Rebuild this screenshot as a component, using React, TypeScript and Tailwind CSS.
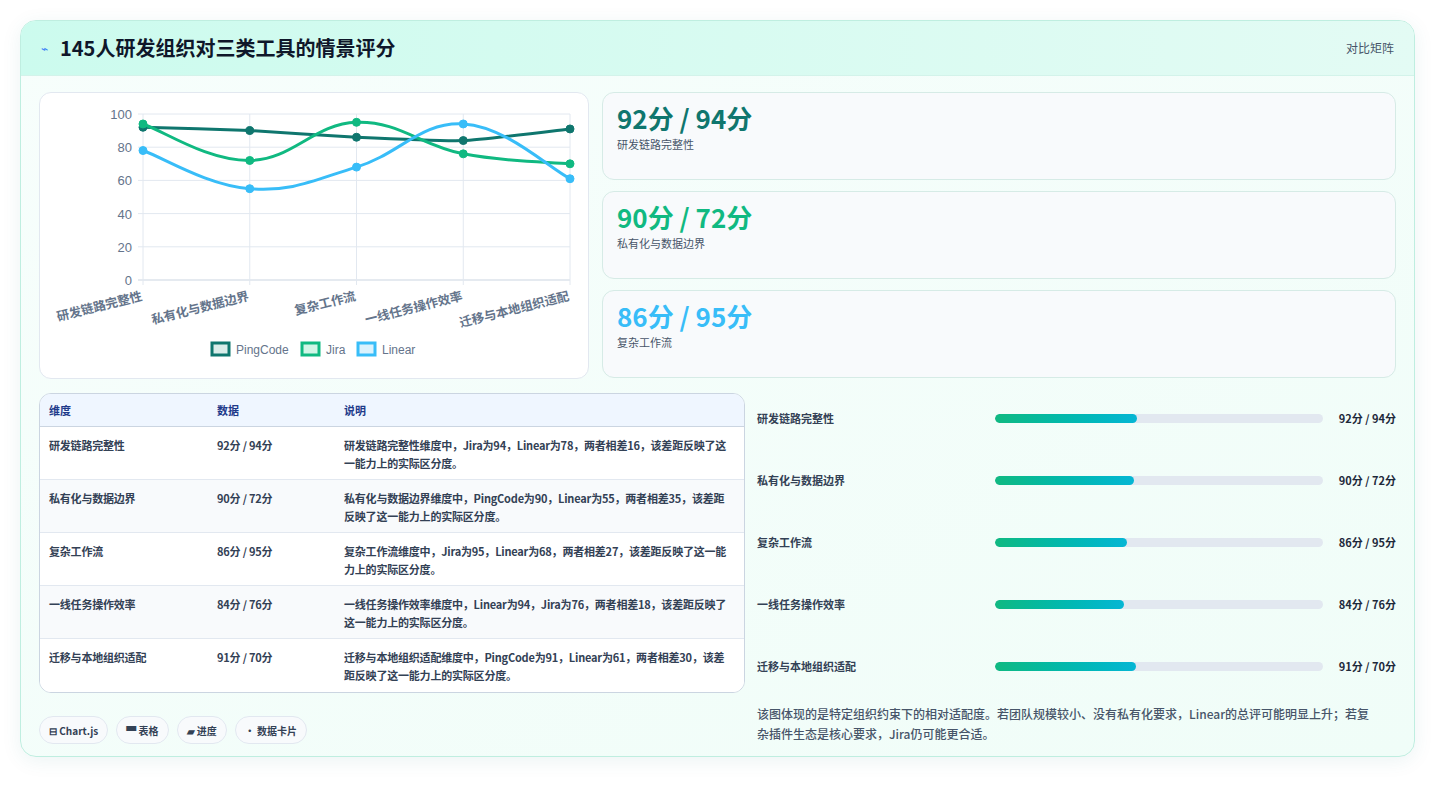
const font = { fontFamily: '"Noto Sans CJK SC", "Noto Sans", sans-serif' };

const dims = ["研发链路完整性", "私有化与数据边界", "复杂工作流", "一线任务操作效率", "迁移与本地组织适配"];
const series = [
  { name: "PingCode", color: "#0f766e", fill: "#d9ece9", data: [92, 90, 86, 84, 91] },
  { name: "Jira", color: "#10b981", fill: "#d1f5e6", data: [94, 72, 95, 76, 70] },
  { name: "Linear", color: "#38bdf8", fill: "#daf2fd", data: [78, 55, 68, 94, 61] },
];
const rows = [
  { d: "研发链路完整性", v: "92分 / 94分", t: "研发链路完整性维度中，Jira为94，Linear为78，两者相差16，该差距反映了这一能力上的实际区分度。", w: 142 },
  { d: "私有化与数据边界", v: "90分 / 72分", t: "私有化与数据边界维度中，PingCode为90，Linear为55，两者相差35，该差距反映了这一能力上的实际区分度。", w: 139 },
  { d: "复杂工作流", v: "86分 / 95分", t: "复杂工作流维度中，Jira为95，Linear为68，两者相差27，该差距反映了这一能力上的实际区分度。", w: 132 },
  { d: "一线任务操作效率", v: "84分 / 76分", t: "一线任务操作效率维度中，Linear为94，Jira为76，两者相差18，该差距反映了这一能力上的实际区分度。", w: 129 },
  { d: "迁移与本地组织适配", v: "91分 / 70分", t: "迁移与本地组织适配维度中，PingCode为91，Linear为61，两者相差30，该差距反映了这一能力上的实际区分度。", w: 141 },
];
const stats = [
  { v: "92分 / 94分", l: "研发链路完整性", c: "text-[#0f766e]" },
  { v: "90分 / 72分", l: "私有化与数据边界", c: "text-[#10b981]" },
  { v: "86分 / 95分", l: "复杂工作流", c: "text-[#38bdf8]" },
];

const X0 = 103, X1 = 530, Y0 = 187, Y100 = 21;
const px = (i: number) => X0 + ((X1 - X0) / 4) * i;
const py = (v: number) => Y0 - ((Y0 - Y100) * v) / 100;

function curve(data: number[], t: number) {
  const pts = data.map((v, i) => [px(i), py(v)]);
  let d = `M${pts[0][0]},${pts[0][1]}`;
  for (let i = 0; i < pts.length - 1; i++) {
    const p0 = pts[Math.max(0, i - 1)], p1 = pts[i], p2 = pts[i + 1], p3 = pts[Math.min(pts.length - 1, i + 2)];
    const c1 = [p1[0] + (p2[0] - p0[0]) * t, p1[1] + (p2[1] - p0[1]) * t];
    const c2 = [p2[0] - (p3[0] - p1[0]) * t, p2[1] - (p3[1] - p1[1]) * t];
    d += ` C${c1[0]},${c1[1]} ${c2[0]},${c2[1]} ${p2[0]},${p2[1]}`;
  }
  return d;
}

function Chart() {
  return (
    <svg width="549" height="286" viewBox="0 0 549 286" style={{ fontFamily: '"Liberation Sans", "Noto Sans CJK SC", sans-serif' }}>
      {[0, 20, 40, 60, 80, 100].map((v) => (
        <g key={v}>
          <line x1={X0 - 5} x2={X1} y1={py(v)} y2={py(v)} stroke={v === 0 ? "#cbd5e1" : "#e2e8f0"} />
          <text x={X0 - 11} y={py(v) + 5} textAnchor="end" fontSize="13" fill="#64748b">{v}</text>
        </g>
      ))}
      {dims.map((_, i) => (
        <line key={i} x1={px(i)} x2={px(i)} y1={Y100} y2={Y0 + 5} stroke="#e2e8f0" />
      ))}
      {dims.map((d, i) => (
        <text key={d} x={px(i)} y={Y0 + 20} textAnchor="end" fontSize="12.5" fontWeight="600" fill="#64748b" transform={`rotate(-14 ${px(i)} ${Y0 + 20})`} style={font}>{d}</text>
      ))}
      {series.map((s, k) => (
        <g key={s.name}>
          <path d={curve(s.data, k === 0 ? 0.08 : 0.2)} fill="none" stroke={s.color} strokeWidth="3" />
          {s.data.map((v, i) => (
            <circle key={i} cx={px(i)} cy={py(v)} r="4" fill={s.color} stroke={s.color} />
          ))}
        </g>
      ))}
      {[
        { x: 172, s: series[0] },
        { x: 262, s: series[1] },
        { x: 318, s: series[2] },
      ].map(({ x, s }) => (
        <g key={s.name}>
          <rect x={x} y={250} width="17" height="12" fill={s.fill} stroke={s.color} strokeWidth="3" />
          <text x={x + 24} y={261} fontSize="12" fill="#64748b">{s.name}</text>
        </g>
      ))}
    </svg>
  );
}

export default function App() {
  return (
    <div className="min-h-screen bg-white p-5" style={font}>
      <div className="rounded-2xl border border-[#bfeee0] bg-gradient-to-br from-[#f7fefc] to-[#f0fdf8] shadow-[0_4px_20px_rgba(15,118,110,0.08)] overflow-hidden">
        <div className="h-[55px] flex items-center justify-between px-5 border-b border-[#d3f3ea] bg-gradient-to-r from-[#ccfbee] to-[#e3fbf4]">
          <div className="flex items-center gap-3">
            <span className="text-[12px] text-[#3b82f6]">⌁</span>
            <h1 className="text-[20px] font-bold text-[#0f172a]">145人研发组织对三类工具的情景评分</h1>
          </div>
          <span className="text-[12px] text-[#475569]">对比矩阵</span>
        </div>
        <div className="px-[18px] pt-[16px] pb-[12px]">
          <div className="flex gap-[13px]">
            <div className="w-[550px] h-[287px] rounded-xl border border-[#e2e8f0] bg-white overflow-hidden">
              <Chart />
            </div>
            <div className="flex-1 flex flex-col gap-[11px]">
              {stats.map((s) => (
                <div key={s.l} className="h-[88px] rounded-xl border border-[#d6ebe6] bg-[#f8fafc] px-[14px] pt-[9px]">
                  <div className={`text-[26px] font-bold leading-[32px] ${s.c}`}>{s.v}</div>
                  <div className="text-[11px] text-[#475569] mt-[2px]">{s.l}</div>
                </div>
              ))}
            </div>
          </div>
          <div className="flex gap-[12px] mt-[14px]">
            <div className="w-[706px]">
              <div className="rounded-xl border border-[#cbd5e1] bg-white overflow-hidden">
                <div className="grid grid-cols-[168px_127px_1fr] h-[33px] items-center bg-[#eff6ff] border-b border-[#cbd5e1] text-[11px] font-semibold text-[#1e3a8a] px-[9px]">
                  <div>维度</div><div>数据</div><div>说明</div>
                </div>
                {rows.map((r, i) => (
                  <div key={r.d} className={`grid grid-cols-[168px_127px_1fr] h-[53px] pt-[9px] px-[9px] text-[11px] font-semibold text-[#334155] leading-[18px] tracking-[-0.2px] ${i < 4 ? "border-b border-[#e2e8f0]" : ""} ${i % 2 ? "bg-[#f8fafc]" : "bg-white"}`}>
                    <div>{r.d}</div><div>{r.v}</div><div>{r.t}</div>
                  </div>
                ))}
              </div>
              <div className="flex gap-2 mt-[23px]">
                {["⊟ Chart.js", "▀ 表格", "▰ 进度", "• 数据卡片"].map((c) => (
                  <span key={c} className="h-[28px] px-[9px] flex items-center rounded-full border border-[#e2e8f0] bg-[#f8fafc] text-[10px] font-semibold text-[#334155]">{c}</span>
                ))}
              </div>
            </div>
            <div className="flex-1 flex flex-col -mt-[6px]">
              {rows.map((r) => (
                <div key={r.d} className="h-[62px] flex items-center">
                  <div className="w-[238px] text-[11px] font-semibold text-[#334155]">{r.d}</div>
                  <div className="w-[328px] h-[9px] rounded-full bg-[#e2e8f0] overflow-hidden">
                    <div className="h-full rounded-full bg-gradient-to-r from-[#10b981] to-[#06b6d4]" style={{ width: r.w }} />
                  </div>
                  <div className="flex-1 text-right text-[11px] font-bold text-[#1e293b]">{r.v}</div>
                </div>
              ))}
              <p className="mt-[7px] pr-[20px] text-[12px] leading-[20px] text-[#475569] font-medium">
                该图体现的是特定组织约束下的相对适配度。若团队规模较小、没有私有化要求，Linear的总评可能明显上升；若复杂插件生态是核心要求，Jira仍可能更合适。
              </p>
            </div>
          </div>
        </div>
      </div>
    </div>
  );
}
